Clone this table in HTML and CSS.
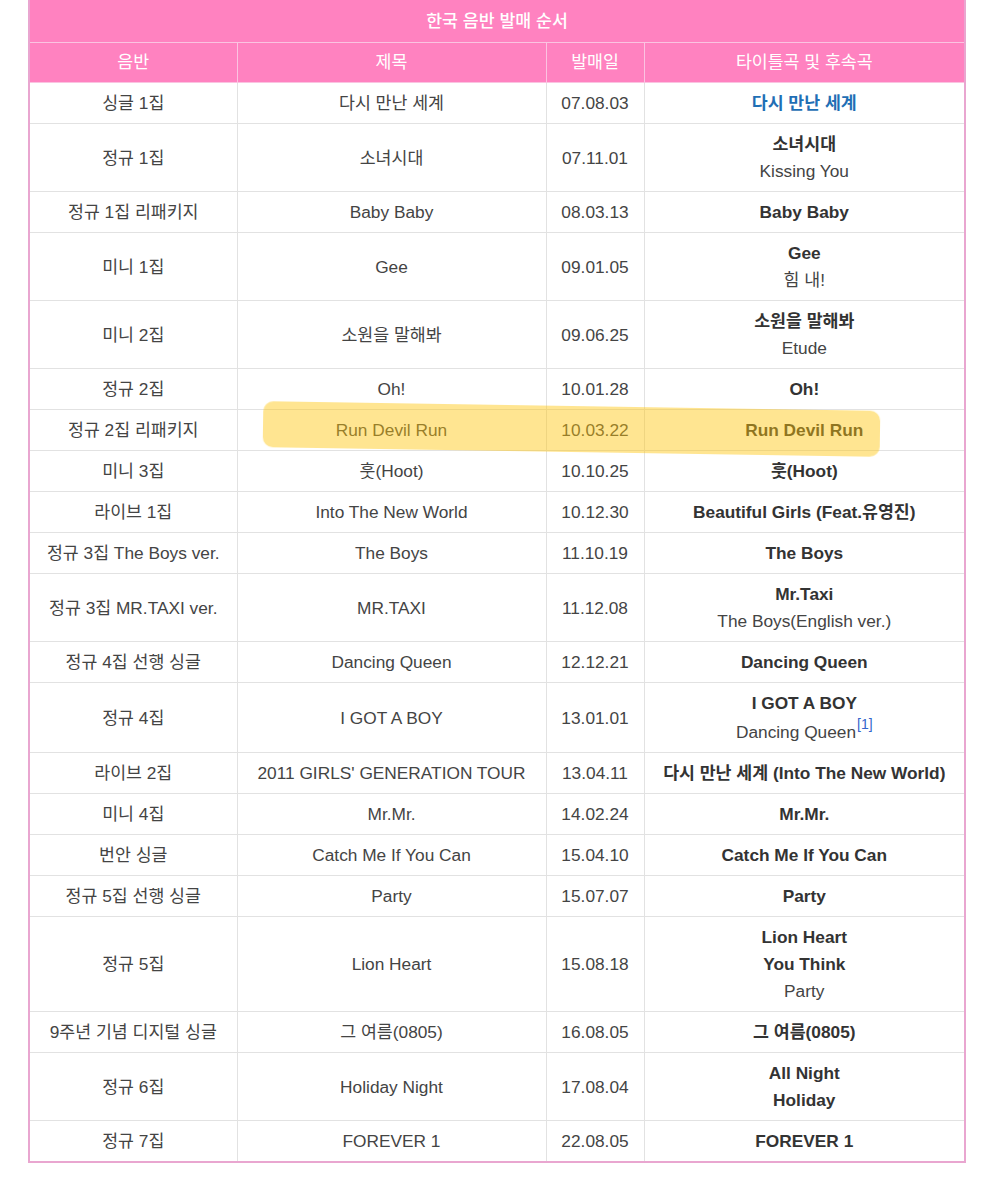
FILE: index.html
```html
<!DOCTYPE html>
<html lang="ko">
<head>
<meta charset="utf-8">
<link rel="stylesheet" href="styles.css">
</head>
<body>
<div class="wrap">
<table class="disco">
<colgroup><col class="c1"><col class="c2"><col class="c3"><col class="c4"></colgroup>
<thead>
<tr class="title"><th colspan="4">한국 음반 발매 순서</th></tr>
<tr class="heads"><th>음반</th><th>제목</th><th>발매일</th><th>타이틀곡 및 후속곡</th></tr>
</thead>
<tbody>
<tr><td>싱글 1집</td><td>다시 만난 세계</td><td>07.08.03</td><td><b class="link">다시 만난 세계</b></td></tr>
<tr><td>정규 1집</td><td>소녀시대</td><td>07.11.01</td><td><b>소녀시대</b><br>Kissing You</td></tr>
<tr><td>정규 1집 리패키지</td><td>Baby Baby</td><td>08.03.13</td><td><b>Baby Baby</b></td></tr>
<tr><td>미니 1집</td><td>Gee</td><td>09.01.05</td><td><b>Gee</b><br>힘 내!</td></tr>
<tr><td>미니 2집</td><td>소원을 말해봐</td><td>09.06.25</td><td><b>소원을 말해봐</b><br>Etude</td></tr>
<tr><td>정규 2집</td><td>Oh!</td><td>10.01.28</td><td><b>Oh!</b></td></tr>
<tr><td>정규 2집 리패키지</td><td>Run Devil Run</td><td>10.03.22</td><td><b>Run Devil Run</b></td></tr>
<tr><td>미니 3집</td><td>훗(Hoot)</td><td>10.10.25</td><td><b>훗(Hoot)</b></td></tr>
<tr><td>라이브 1집</td><td>Into The New World</td><td>10.12.30</td><td><b>Beautiful Girls (Feat.유영진)</b></td></tr>
<tr><td>정규 3집 The Boys ver.</td><td>The Boys</td><td>11.10.19</td><td><b>The Boys</b></td></tr>
<tr><td>정규 3집 MR.TAXI ver.</td><td>MR.TAXI</td><td>11.12.08</td><td><b>Mr.Taxi</b><br>The Boys(English ver.)</td></tr>
<tr><td>정규 4집 선행 싱글</td><td>Dancing Queen</td><td>12.12.21</td><td><b>Dancing Queen</b></td></tr>
<tr><td>정규 4집</td><td>I GOT A BOY</td><td>13.01.01</td><td><b>I GOT A BOY</b><br>Dancing Queen<sup class="ref">[1]</sup></td></tr>
<tr><td>라이브 2집</td><td>2011 GIRLS' GENERATION TOUR</td><td>13.04.11</td><td><b>다시 만난 세계 (Into The New World)</b></td></tr>
<tr><td>미니 4집</td><td>Mr.Mr.</td><td>14.02.24</td><td><b>Mr.Mr.</b></td></tr>
<tr><td>번안 싱글</td><td>Catch Me If You Can</td><td>15.04.10</td><td><b>Catch Me If You Can</b></td></tr>
<tr><td>정규 5집 선행 싱글</td><td>Party</td><td>15.07.07</td><td><b>Party</b></td></tr>
<tr><td>정규 5집</td><td>Lion Heart</td><td>15.08.18</td><td><b>Lion Heart</b><br><b>You Think</b><br>Party</td></tr>
<tr><td>9주년 기념 디지털 싱글</td><td>그 여름(0805)</td><td>16.08.05</td><td><b>그 여름(0805)</b></td></tr>
<tr><td>정규 6집</td><td>Holiday Night</td><td>17.08.04</td><td><b>All Night</b><br><b>Holiday</b></td></tr>
<tr><td>정규 7집</td><td>FOREVER 1</td><td>22.08.05</td><td><b>FOREVER 1</b></td></tr>
</tbody>
</table>
<div class="marker"></div>
</div>
</body>
</html>
```

FILE: styles.css
```css
html, body {
  margin: 0;
  padding: 0;
  background: #ffffff;
}
body {
  font-family: "Liberation Sans", Arial, "Noto Sans CJK KR", sans-serif;
  color: #444444;
}
.wrap {
  position: relative;
  margin: -2px 0 0 28px;
  width: 936px;
}
.disco {
  border-collapse: collapse;
  width: 936px;
  table-layout: fixed;
  border: 2px solid #e9a6d0;
  font-size: 17.3px;
  line-height: 27px;
}
.c1 { width: 208px; }
.c2 { width: 309px; }
.c3 { width: 98px; }
.c4 { width: 321px; }
.disco th {
  background: #ff82c0;
  color: #ffffff;
  font-weight: normal;
  border: 1px solid #fbc3e1;
  padding: 6px 6px 6px;
  text-align: center;
}
.disco tr.title th {
  padding: 8px 6px 7px;
  border-top: none;
  font-weight: 500;
}
.disco td {
  border: 1px solid #e2e2e2;
  padding: 7px 6px 6px;
  text-align: center;
  vertical-align: middle;
}
.disco b {
  color: #333333;
  font-weight: bold;
}
.disco b.link {
  color: #1f6fb5;
}
.ref {
  color: #3366cc;
  font-size: 14px;
  line-height: 1;
  vertical-align: 9px;
  margin-left: 1px;
}
.marker {
  position: absolute;
  left: 235px;
  top: 408px;
  width: 617px;
  height: 46px;
  background: rgba(255, 198, 10, 0.45);
  border-radius: 10px;
  transform: rotate(0.9deg);
  filter: blur(0.6px);
}
```
